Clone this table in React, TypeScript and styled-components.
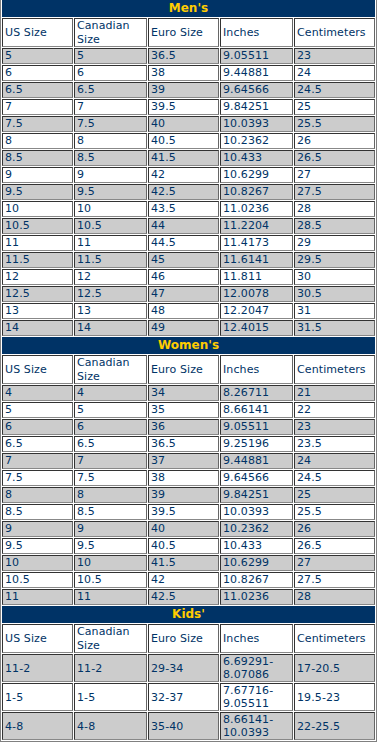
import React from "react";
import styled, { createGlobalStyle } from "styled-components";

const GlobalStyle = createGlobalStyle`
  html, body { margin: 0; padding: 0; background: #ffffff; }
  body { font-family: "DejaVu Sans", Verdana, sans-serif; }
`;

const Sheet = styled.div`
  display: grid;
  grid-template-columns: 71px 73px 71px 73px 81px;
  gap: 1px;
  padding: 0 1px 1px 1px;
  width: 377px;
  box-sizing: border-box;
  border: 1px solid #808080;
  border-top: 0;
  font-family: "DejaVu Sans", Verdana, sans-serif;
  font-size: 11px;
  color: #003366;
`;

const Title = styled.div`
  grid-column: 1 / -1;
  height: 17px;
  background: #003366;
  color: #ffcc00;
  font-weight: bold;
  font-size: 12px;
  line-height: 17px;
  text-align: center;
`;

type Kind = "head" | "data" | "tall";

const Cell = styled.div<{ $gray: boolean; $kind: Kind }>`
  display: flex;
  align-items: center;
  box-sizing: border-box;
  padding: 0 1px 0 2px;
  border-style: solid;
  border-width: 1px;
  border-color: #333333 #666666 #888888 #333333;
  background: ${(p) => (p.$gray ? "#cccccc" : "#ffffff")};
  height: ${(p) => (p.$kind === "head" ? 29 : p.$kind === "tall" ? 28 : 16)}px;
  line-height: ${(p) => (p.$kind === "head" ? 13.5 : p.$kind === "tall" ? 13 : 14)}px;
  letter-spacing: 0.1px;
  white-space: nowrap;
`;

const Lines = styled.span`
  display: block;
`;

const headers = ["US Size", "Canadian\nSize", "Euro Size", "Inches", "Centimeters"];

const men: string[][] = [
  ["5", "5", "36.5", "9.05511", "23"],
  ["6", "6", "38", "9.44881", "24"],
  ["6.5", "6.5", "39", "9.64566", "24.5"],
  ["7", "7", "39.5", "9.84251", "25"],
  ["7.5", "7.5", "40", "10.0393", "25.5"],
  ["8", "8", "40.5", "10.2362", "26"],
  ["8.5", "8.5", "41.5", "10.433", "26.5"],
  ["9", "9", "42", "10.6299", "27"],
  ["9.5", "9.5", "42.5", "10.8267", "27.5"],
  ["10", "10", "43.5", "11.0236", "28"],
  ["10.5", "10.5", "44", "11.2204", "28.5"],
  ["11", "11", "44.5", "11.4173", "29"],
  ["11.5", "11.5", "45", "11.6141", "29.5"],
  ["12", "12", "46", "11.811", "30"],
  ["12.5", "12.5", "47", "12.0078", "30.5"],
  ["13", "13", "48", "12.2047", "31"],
  ["14", "14", "49", "12.4015", "31.5"],
];

const women: string[][] = [
  ["4", "4", "34", "8.26711", "21"],
  ["5", "5", "35", "8.66141", "22"],
  ["6", "6", "36", "9.05511", "23"],
  ["6.5", "6.5", "36.5", "9.25196", "23.5"],
  ["7", "7", "37", "9.44881", "24"],
  ["7.5", "7.5", "38", "9.64566", "24.5"],
  ["8", "8", "39", "9.84251", "25"],
  ["8.5", "8.5", "39.5", "10.0393", "25.5"],
  ["9", "9", "40", "10.2362", "26"],
  ["9.5", "9.5", "40.5", "10.433", "26.5"],
  ["10", "10", "41.5", "10.6299", "27"],
  ["10.5", "10.5", "42", "10.8267", "27.5"],
  ["11", "11", "42.5", "11.0236", "28"],
];

const kids: string[][] = [
  ["11-2", "11-2", "29-34", "6.69291-\n8.07086", "17-20.5"],
  ["1-5", "1-5", "32-37", "7.67716-\n9.05511", "19.5-23"],
  ["4-8", "4-8", "35-40", "8.66141-\n10.0393", "22-25.5"],
];

const Text: React.FC<{ value: string }> = ({ value }) => {
  const parts = value.split("\n");
  return (
    <Lines>
      {parts.map((p, i) => (
        <React.Fragment key={i}>
          {i > 0 && <br />}
          {p}
        </React.Fragment>
      ))}
    </Lines>
  );
};

const Section: React.FC<{ title: string; rows: string[][]; kind: Kind }> = ({ title, rows, kind }) => (
  <>
    <Title>{title}</Title>
    {headers.map((h) => (
      <Cell key={h} $gray={false} $kind="head">
        <Text value={h} />
      </Cell>
    ))}
    {rows.map((row, r) =>
      row.map((v, c) => (
        <Cell key={`${r}-${c}`} $gray={r % 2 === 0} $kind={kind}>
          <Text value={v} />
        </Cell>
      ))
    )}
  </>
);

export default function App() {
  return (
    <>
      <GlobalStyle />
      <Sheet>
        <Section title="Men's" rows={men} kind="data" />
        <Section title="Women's" rows={women} kind="data" />
        <Section title="Kids'" rows={kids} kind="tall" />
      </Sheet>
    </>
  );
}
